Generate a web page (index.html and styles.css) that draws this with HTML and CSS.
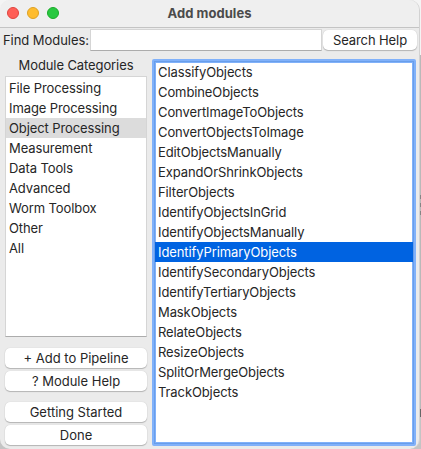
FILE: index.html
```
<!DOCTYPE html>
<html lang="en">
<head>
<meta charset="utf-8">
<title>Add modules</title>
<link rel="stylesheet" href="styles.css">
</head>
<body>
<div class="window">
  <header class="titlebar">
    <div class="lights"><i class="light close"></i><i class="light minimize"></i><i class="light expand"></i></div>
    <h1 class="title">Add modules</h1>
  </header>
  <div class="search">
    <label class="search-label" for="find">Find Modules:</label>
    <input class="search-input" id="find" type="text">
    <button class="button search-button">Search Help</button>
  </div>
  <main class="content">
    <section class="sidebar">
      <h2 class="heading">Module Categories</h2>
      <ul class="list categories">
        <li>File Processing</li>
        <li>Image Processing</li>
        <li class="current">Object Processing</li>
        <li>Measurement</li>
        <li>Data Tools</li>
        <li>Advanced</li>
        <li>Worm Toolbox</li>
        <li>Other</li>
        <li>All</li>
      </ul>
      <div class="actions">
        <button class="button">+ Add to Pipeline</button>
        <button class="button">? Module Help</button>
      </div>
      <div class="actions">
        <button class="button">Getting Started</button>
        <button class="button">Done</button>
      </div>
    </section>
    <ul class="list modules">
      <li>ClassifyObjects</li>
      <li>CombineObjects</li>
      <li>ConvertImageToObjects</li>
      <li>ConvertObjectsToImage</li>
      <li>EditObjectsManually</li>
      <li>ExpandOrShrinkObjects</li>
      <li>FilterObjects</li>
      <li>IdentifyObjectsInGrid</li>
      <li>IdentifyObjectsManually</li>
      <li class="selected">IdentifyPrimaryObjects</li>
      <li>IdentifySecondaryObjects</li>
      <li>IdentifyTertiaryObjects</li>
      <li>MaskObjects</li>
      <li>RelateObjects</li>
      <li>ResizeObjects</li>
      <li>SplitOrMergeObjects</li>
      <li>TrackObjects</li>
    </ul>
  </main>
</div>
</body>
</html>
```
FILE: styles.css
```
* { box-sizing: border-box; margin: 0; padding: 0; }
body {
  width: 421px;
  height: 449px;
  overflow: hidden;
  background: linear-gradient(#f4f4f4 0 55px, #b9b9b9 55px 195px, #858585 195px 199px, #b9b9b9 199px 203px, #858585 203px 207px, #b9b9b9 207px 211px, #858585 211px 215px, #b9b9b9 215px 409px, #666 409px 417px, #c4c4c4 417px);
  color: #262626;
  font: 13px/20px Inter, "Liberation Sans", sans-serif;
  letter-spacing: -0.1px;
}
.window {
  display: flex;
  flex-direction: column;
  width: 420px;
  height: 449px;
  background: #ebebeb;
  border-right: 1px solid #d2d2d2;
  border-radius: 10px;
}
.titlebar {
  display: grid;
  grid-template-columns: 66px 1fr 66px;
  height: 28px;
  background: #efefef;
  border-bottom: 1px solid #c4c4c4;
  border-radius: 10px 10px 0 0;
}
.lights { display: flex; gap: 8px; padding: 7px 0 0 7px; }
.light { width: 12px; height: 12px; border: 1px solid; border-radius: 50%; }
.close { background: #ff5f57; border-color: #e0443e; }
.minimize { background: #febc2e; border-color: #dea123; }
.expand { background: #28c840; border-color: #1aab29; }
.title {
  color: #4b4b4b;
  font-size: 13px;
  font-weight: 700;
  line-height: 26px;
  text-align: center;
  letter-spacing: 0.05px;
}
.search { display: flex; padding: 1px 2px 0 3px; height: 31px; }
.search-label { width: 87px; line-height: 23px; white-space: nowrap; letter-spacing: -0.05px; }
.search-input {
  width: 232px;
  height: 22px;
  background: #fff;
  border: 1px solid #d5d5d5;
  border-bottom-color: #acacac;
  border-radius: 0;
}
.button {
  width: 142px;
  height: 20px;
  background: #fff;
  border: 0;
  border-radius: 5px;
  box-shadow: 0 0 1px rgba(0,0,0,.2), 0 1px 1px rgba(0,0,0,.22);
  color: inherit;
  font: inherit;
  letter-spacing: 0;
}
.search-button { width: 94px; margin: 1px 0 0 1px; letter-spacing: -0.1px; }
.content { display: flex; gap: 5px; padding-left: 5px; }
.sidebar { width: 142px; }
.heading { height: 17px; font-size: 13px; font-weight: 400; line-height: 12px; text-align: center; }
.list { list-style: none; background: #fff; white-space: nowrap; }
.categories {
  height: 261px;
  padding-top: 1px;
  border: 1px solid #d5d5d5;
  border-bottom-color: #acacac;
}
.categories li { padding-left: 3px; }
.current { background: #dcdcdc; }
.actions { display: grid; gap: 3px; padding-top: 11px; }
.modules {
  width: 264px;
  height: 387px;
  border: 2px solid #80b1fa;
  border-radius: 2px;
  box-shadow: inset 0 0 0 1px #699eea, inset 0 0 0 2px #80b1fa;
  padding: 1px 1px 0;
}
.modules li { padding-left: 3px; }
.selected { background: #0063e1; color: #fff; }
```
